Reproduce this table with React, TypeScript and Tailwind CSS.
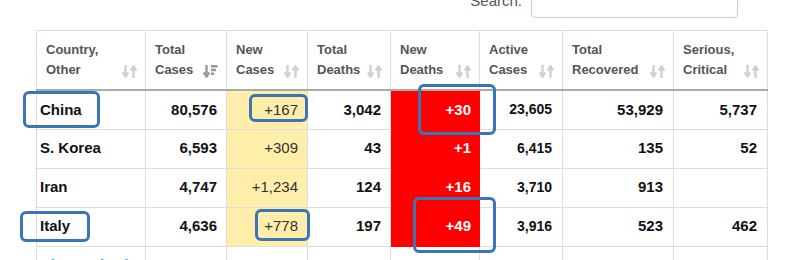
import React from 'react';

type Row = {
  name: string;
  total: string;
  newCases: string;
  deaths: string;
  newDeaths: string;
  active: string;
  recovered: string;
  serious: string;
  link?: boolean;
};

const rows: Row[] = [
  { name: 'China', total: '80,576', newCases: '+167', deaths: '3,042', newDeaths: '+30', active: '23,605', recovered: '53,929', serious: '5,737' },
  { name: 'S. Korea', total: '6,593', newCases: '+309', deaths: '43', newDeaths: '+1', active: '6,415', recovered: '135', serious: '52' },
  { name: 'Iran', total: '4,747', newCases: '+1,234', deaths: '124', newDeaths: '+16', active: '3,710', recovered: '913', serious: '' },
  { name: 'Italy', total: '4,636', newCases: '+778', deaths: '197', newDeaths: '+49', active: '3,916', recovered: '523', serious: '462' },
  { name: 'Diamond Princess', total: '696', newCases: '', deaths: '6', newDeaths: '', active: '445', recovered: '245', serious: '36', link: true },
];

const SortIcon: React.FC<{ active?: boolean }> = ({ active }) => (
  <svg width="15" height="13" viewBox="0 0 15 13" className="shrink-0 mb-[2px]">
    {active ? (
      <g fill="none" stroke="#999" strokeWidth="2.4">
        <path d="M3.5 0v10" />
        <path d="M0.8 7.5l2.7 4 2.7-4" />
        <path d="M8 1.2h6.5M8 5h5M8 8.8h3.2" />
      </g>
    ) : (
      <g fill="none" stroke="#d0d0d0" strokeWidth="2.4">
        <path d="M3.5 0v10" />
        <path d="M0.8 7.5l2.7 4 2.7-4" />
        <path d="M11.5 13V3" />
        <path d="M8.8 5.5l2.7-4 2.7 4" />
      </g>
    )}
  </svg>
);

const headers: { l1: string; l2: string; sorted?: boolean }[] = [
  { l1: 'Country,', l2: 'Other' },
  { l1: 'Total', l2: 'Cases', sorted: true },
  { l1: 'New', l2: 'Cases' },
  { l1: 'Total', l2: 'Deaths' },
  { l1: 'New', l2: 'Deaths' },
  { l1: 'Active', l2: 'Cases' },
  { l1: 'Total', l2: 'Recovered' },
  { l1: 'Serious,', l2: 'Critical' },
];

const Mark: React.FC<{ className: string }> = ({ className }) => (
  <div className={`absolute border-[3px] border-[#3a76b7] rounded-[6px] pointer-events-none ${className}`} />
);

export default function App() {
  return (
    <div className="relative w-[796px] h-[260px] overflow-hidden bg-white font-['Liberation_Sans',Arial,sans-serif]">
      {/* search */}
      <div className="flex items-center justify-end gap-[9px] pr-[58px] mt-[-16px]">
        <span className="text-[15px] text-[#555]">Search:</span>
        <div className="w-[207px] h-[34px] border border-[#ccc] rounded-[4px]" />
      </div>

      <table className="ml-[36px] mt-[12px] w-[731px] table-fixed border-collapse">
        <colgroup>
          <col className="w-[109px]" />
          <col className="w-[81px]" />
          <col className="w-[81px]" />
          <col className="w-[83px]" />
          <col className="w-[89px]" />
          <col className="w-[83px]" />
          <col className="w-[111px]" />
          <col className="w-[94px]" />
        </colgroup>
        <thead>
          <tr>
            {headers.map((h, i) => (
              <th
                key={i}
                className="border border-[#ddd] border-b-2 border-b-[#aaa] pt-[9px] pb-[9px] pl-[9px] pr-[8px] text-left align-bottom font-bold text-[13px] leading-5 text-[#555]"
              >
                <div className="flex items-end justify-between gap-1">
                  <div>
                    {h.l1}
                    <br />
                    {h.l2}
                  </div>
                  <SortIcon active={h.sorted} />
                </div>
              </th>
            ))}
          </tr>
        </thead>
        <tbody>
          {rows.map((r) => (
            <tr key={r.name} className="h-[39px]">
              <td
                className={`border border-[#ddd] pl-[3px] pr-[6px] text-[15px] font-bold whitespace-nowrap overflow-hidden ${
                  r.link ? 'text-[#1ba1d9]' : 'text-[#111]'
                }`}
              >
                {r.name}
              </td>
              <td className="border border-[#ddd] px-[9px] text-right text-[15px] font-bold text-[#111]">{r.total}</td>
              <td className={`border border-[#ddd] px-[9px] text-right text-[15px] text-[#333] ${r.newCases ? 'bg-[#ffeeaa]' : ''}`}>
                {r.newCases}
              </td>
              <td className="border border-[#ddd] px-[9px] text-right text-[15px] font-bold text-[#111]">{r.deaths}</td>
              <td
                className={`border px-[8px] text-right text-[15px] font-bold text-white ${
                  r.newDeaths ? 'bg-[#ff0000] border-[#ff0000]' : 'border-[#ddd]'
                }`}
              >
                {r.newDeaths}
              </td>
              <td className="border border-[#ddd] px-[10px] text-right text-[14px] font-bold text-[#111]">{r.active}</td>
              <td className="border border-[#ddd] px-[10px] text-right text-[15px] font-bold text-[#111]">{r.recovered}</td>
              <td className="border border-[#ddd] px-[10px] text-right text-[15px] font-bold text-[#111]">{r.serious}</td>
            </tr>
          ))}
        </tbody>
      </table>

      {/* annotation boxes */}
      <Mark className="left-[23px] top-[91px] w-[77px] h-[37px]" />
      <Mark className="left-[249px] top-[94px] w-[59px] h-[28px]" />
      <Mark className="left-[418px] top-[84px] w-[78px] h-[51px]" />
      <Mark className="left-[20px] top-[211px] w-[70px] h-[31px]" />
      <Mark className="left-[255px] top-[209px] w-[55px] h-[32px]" />
      <Mark className="left-[413px] top-[197px] w-[83px] h-[56px]" />
    </div>
  );
}
